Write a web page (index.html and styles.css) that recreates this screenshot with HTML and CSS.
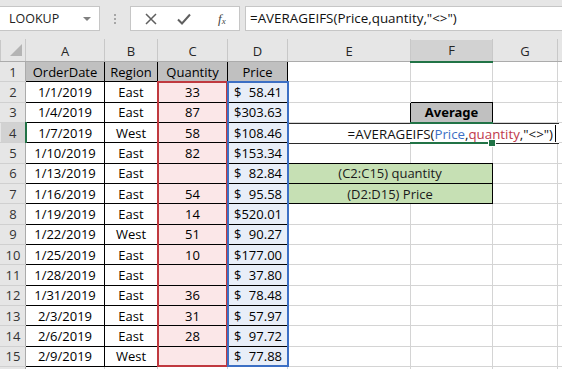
FILE: index.html
```html
<!DOCTYPE html>
<html lang="en">
<head>
    <meta charset="UTF-8">
    <meta name="viewport" content="width=device-width, initial-scale=1.0">
    <title>AVERAGEIFS</title>
    <link rel="stylesheet" href="styles.css">
</head>
<body>

<div class="toolbar">
    <div class="name-box"><span>LOOKUP</span><span class="caret"></span></div>
    <div class="grip"><i></i><i></i><i></i></div>
    <div class="fx-buttons">
        <svg class="btn-cancel" width="12" height="12" viewBox="0 0 12 12">
            <path d="M1 1L11 11M11 1L1 11" stroke="#5f5f5f" stroke-width="1.5" fill="none"/>
        </svg>
        <svg class="btn-enter" width="14" height="12" viewBox="0 0 14 12">
            <path d="M1 6.5L5 10.5L13 1.5" stroke="#5f5f5f" stroke-width="2" fill="none"/>
        </svg>
        <span class="fx">f<sub>x</sub></span>
    </div>
    <div class="formula-input">=AVERAGEIFS(Price,quantity,"&lt;&gt;")</div>
</div>

<div class="sheet">
    <table class="grid">
        <colgroup>
            <col class="w-hdr"><col class="w-a"><col class="w-b"><col class="w-c"><col class="w-d">
            <col class="w-e"><col class="w-f"><col class="w-g"><col class="w-h">
        </colgroup>
        <thead>
            <tr>
                <th class="corner"><span class="corner-tri"></span></th>
                <th>A</th><th>B</th><th>C</th><th>D</th><th>E</th><th class="sel">F</th><th>G</th><th></th>
            </tr>
        </thead>
        <tbody>
            <tr class="data head-row">
                <th>1</th><td>OrderDate</td><td>Region</td><td>Quantity</td><td>Price</td>
                <td></td><td></td><td></td><td></td>
            </tr>
            <tr class="data">
                <th>2</th><td>1/1/2019</td><td>East</td><td class="qty">33</td>
                <td class="price"><div class="acct"><span>$</span>58.41</div></td>
                <td></td><td class="above-avg"></td><td></td><td></td>
            </tr>
            <tr class="data">
                <th>3</th><td>1/4/2019</td><td>East</td><td class="qty">87</td>
                <td class="price"><div class="acct"><span>$</span>303.63</div></td>
                <td class="left-of-avg"></td><td class="avg">Average</td><td></td><td></td>
            </tr>
            <tr class="data">
                <th class="sel">4</th><td>1/7/2019</td><td>West</td><td class="qty">58</td>
                <td class="price"><div class="acct"><span>$</span>108.46</div></td>
                <td></td><td></td><td></td><td></td>
            </tr>
            <tr class="data">
                <th>5</th><td>1/10/2019</td><td>East</td><td class="qty">82</td>
                <td class="price"><div class="acct"><span>$</span>153.34</div></td>
                <td class="above-note"></td><td class="above-note"></td><td></td><td></td>
            </tr>
            <tr class="data">
                <th>6</th><td>1/13/2019</td><td>East</td><td class="qty"></td>
                <td class="price"><div class="acct"><span>$</span>82.84</div></td>
                <td class="note" colspan="2">(C2:C15) quantity</td><td></td><td></td>
            </tr>
            <tr class="data">
                <th>7</th><td>1/16/2019</td><td>East</td><td class="qty">54</td>
                <td class="price"><div class="acct"><span>$</span>95.58</div></td>
                <td class="note" colspan="2">(D2:D15) Price</td><td></td><td></td>
            </tr>
            <tr class="data">
                <th>8</th><td>1/19/2019</td><td>East</td><td class="qty">14</td>
                <td class="price"><div class="acct"><span>$</span>520.01</div></td>
                <td></td><td></td><td></td><td></td>
            </tr>
            <tr class="data">
                <th>9</th><td>1/22/2019</td><td>West</td><td class="qty">51</td>
                <td class="price"><div class="acct"><span>$</span>90.27</div></td>
                <td></td><td></td><td></td><td></td>
            </tr>
            <tr class="data">
                <th>10</th><td>1/25/2019</td><td>East</td><td class="qty">10</td>
                <td class="price"><div class="acct"><span>$</span>177.00</div></td>
                <td></td><td></td><td></td><td></td>
            </tr>
            <tr class="data">
                <th>11</th><td>1/28/2019</td><td>East</td><td class="qty"></td>
                <td class="price"><div class="acct"><span>$</span>37.80</div></td>
                <td></td><td></td><td></td><td></td>
            </tr>
            <tr class="data">
                <th>12</th><td>1/31/2019</td><td>East</td><td class="qty">36</td>
                <td class="price"><div class="acct"><span>$</span>78.48</div></td>
                <td></td><td></td><td></td><td></td>
            </tr>
            <tr class="data">
                <th>13</th><td>2/3/2019</td><td>East</td><td class="qty">31</td>
                <td class="price"><div class="acct"><span>$</span>57.97</div></td>
                <td></td><td></td><td></td><td></td>
            </tr>
            <tr class="data">
                <th>14</th><td>2/6/2019</td><td>East</td><td class="qty">28</td>
                <td class="price"><div class="acct"><span>$</span>97.72</div></td>
                <td></td><td></td><td></td><td></td>
            </tr>
            <tr class="data">
                <th>15</th><td>2/9/2019</td><td>West</td><td class="qty"></td>
                <td class="price"><div class="acct"><span>$</span>77.88</div></td>
                <td></td><td></td><td></td><td></td>
            </tr>
            <tr>
                <th></th><td></td><td></td><td></td><td></td>
                <td></td><td></td><td></td><td></td>
            </tr>
        </tbody>
    </table>

    <!-- range highlights from the formula being edited -->
    <div class="range range-qty"></div>
    <div class="range range-price"></div>

    <div class="cell-editor">=AVERAGEIFS(<span class="ref-price">Price</span>,<span class="ref-qty">quantity</span>,"&lt;&gt;")<span class="text-caret"></span></div>
    <div class="active-cell"></div>
</div>

</body>
</html>
```

FILE: styles.css
```css
* {
    margin: 0;
    padding: 0;
    box-sizing: border-box;
}

body {
    font-family: "Open Sans", "Liberation Sans", sans-serif;
    background-color: #ffffff;
    color: #000000;
    width: 562px;
    height: 369px;
    overflow: hidden;
}

/* formula bar */
.toolbar {
    height: 39px;
    background-color: #e6e6e6;
    display: flex;
    align-items: flex-start;
    padding-top: 6px;
}

.name-box {
    width: 101px;
    height: 25px;
    margin-left: -1px;
    background: #ffffff;
    border: 1px solid #c6c6c6;
    display: flex;
    align-items: center;
    justify-content: space-between;
    padding: 0 8px 0 9px;
    font-size: 12.5px;
    color: #222222;
}

.caret {
    border-left: 4px solid transparent;
    border-right: 4px solid transparent;
    border-top: 4px solid #808080;
}

.grip {
    width: 30px;
    height: 25px;
    display: flex;
    flex-direction: column;
    align-items: center;
    justify-content: center;
    gap: 2px;
}

.grip i {
    width: 2px;
    height: 2px;
    background: #a6a6a6;
}

.fx-buttons {
    width: 110px;
    height: 25px;
    background: #ffffff;
    border: 1px solid #c6c6c6;
    display: flex;
    align-items: center;
}

.btn-cancel {
    margin-left: 14px;
}

.btn-enter {
    margin-left: 20px;
}

.fx {
    margin-left: 27px;
    font-family: "Liberation Serif", serif;
    font-style: italic;
    font-size: 13px;
    color: #444444;
}

.fx sub {
    font-size: 9px;
    vertical-align: -1px;
}

.formula-input {
    flex: 1;
    height: 25px;
    margin-left: 5px;
    background: #ffffff;
    border: 1px solid #c6c6c6;
    border-right: none;
    padding-left: 4px;
    font-size: 13.4px;
    line-height: 23px;
    color: #111111;
    white-space: nowrap;
}

/* worksheet */
.sheet {
    position: relative;
    height: 330px;
    overflow: hidden;
}

.grid {
    border-collapse: collapse;
    table-layout: fixed;
    width: 647px;
    font-size: 13px;
}

.w-hdr { width: 25px; }
.w-a { width: 79px; }
.w-b { width: 53px; }
.w-c { width: 70px; }
.w-d { width: 60px; }
.w-e { width: 123px; }
.w-f { width: 82px; }
.w-g { width: 65px; }
.w-h { width: 90px; }

.grid td,
.grid th {
    height: 20.33px;
    padding: 0 3px;
    border: 1px solid #d4d4d4;
    white-space: nowrap;
    overflow: hidden;
    text-align: center;
    font-weight: normal;
    line-height: 18px;
}

.grid thead th {
    height: 22px;
    background: #e6e6e6;
    border-color: #e6e6e6 #c8c8c8 #ababab #c8c8c8;
    color: #262626;
}

.grid tbody th {
    background: #e6e6e6;
    border-color: #d0d0d0 #ababab #d0d0d0 #e6e6e6;
    color: #333333;
    padding: 0;
}

.grid thead th.sel {
    background: #d2d2d2;
    border-bottom: 2px solid #217346;
}

.grid tbody th.sel {
    background: #d2d2d2;
    border-right: 2px solid #217346;
}

.corner {
    text-align: right !important;
    vertical-align: bottom;
}

.corner-tri {
    display: inline-block;
    margin: 0 0 1px 0;
    border-left: 12px solid transparent;
    border-bottom: 12px solid #b4b4b4;
}

.grid tr.data td:nth-child(-n+5) {
    border-color: #000000;
}

.head-row td:nth-child(-n+5) {
    background: #c0c0c0;
}

.qty {
    background: #fbe7e8;
}

.price {
    background: #e8eef8;
}

.acct {
    display: flex;
    justify-content: space-between;
    padding: 0 2px 0 3px;
}

.avg {
    background: #c0c0c0;
    font-family: "Noto Sans", "Liberation Sans", sans-serif;
    font-weight: bold !important;
    border: 1px solid #000000 !important;
}

.above-avg {
    border-bottom-color: #000000 !important;
}

.left-of-avg {
    border-right-color: #000000 !important;
}

.above-note {
    border-bottom-color: #000000 !important;
}

.note {
    background: #c6e0b4;
    border: 1px solid #000000 !important;
    color: #1a1a1a;
}

/* overlays drawn over the grid while the formula is edited */
.range {
    position: absolute;
    top: 42px;
    height: 286px;
    border: 2px solid;
}

.range-qty {
    left: 157px;
    width: 71px;
    border-color: #c0393f;
}

.range-price {
    left: 227px;
    width: 62px;
    border-color: #3c6fc4;
}

.cell-editor {
    position: absolute;
    left: 289px;
    top: 84px;
    width: 270px;
    height: 21px;
    background: #ffffff;
    border-top: 1px solid #2b2b2b;
    border-bottom: 1px solid #2b2b2b;
    display: flex;
    justify-content: flex-end;
    align-items: center;
    padding-right: 3px;
    font-size: 13.3px;
    white-space: nowrap;
    color: #111111;
}

.ref-price {
    color: #3c6fc4;
}

.ref-qty {
    color: #c0394b;
}

.text-caret {
    width: 1px;
    height: 17px;
    margin-left: 2px;
    background: #000000;
}

.active-cell {
    position: absolute;
    left: 410px;
    top: 83px;
    width: 83px;
    height: 22px;
    border-top: 2px solid #217346;
    border-bottom: 2px solid #217346;
}

.active-cell::after {
    content: "";
    position: absolute;
    right: -3px;
    bottom: -5px;
    width: 6px;
    height: 6px;
    background: #217346;
    border: 1px solid #ffffff;
}
```
